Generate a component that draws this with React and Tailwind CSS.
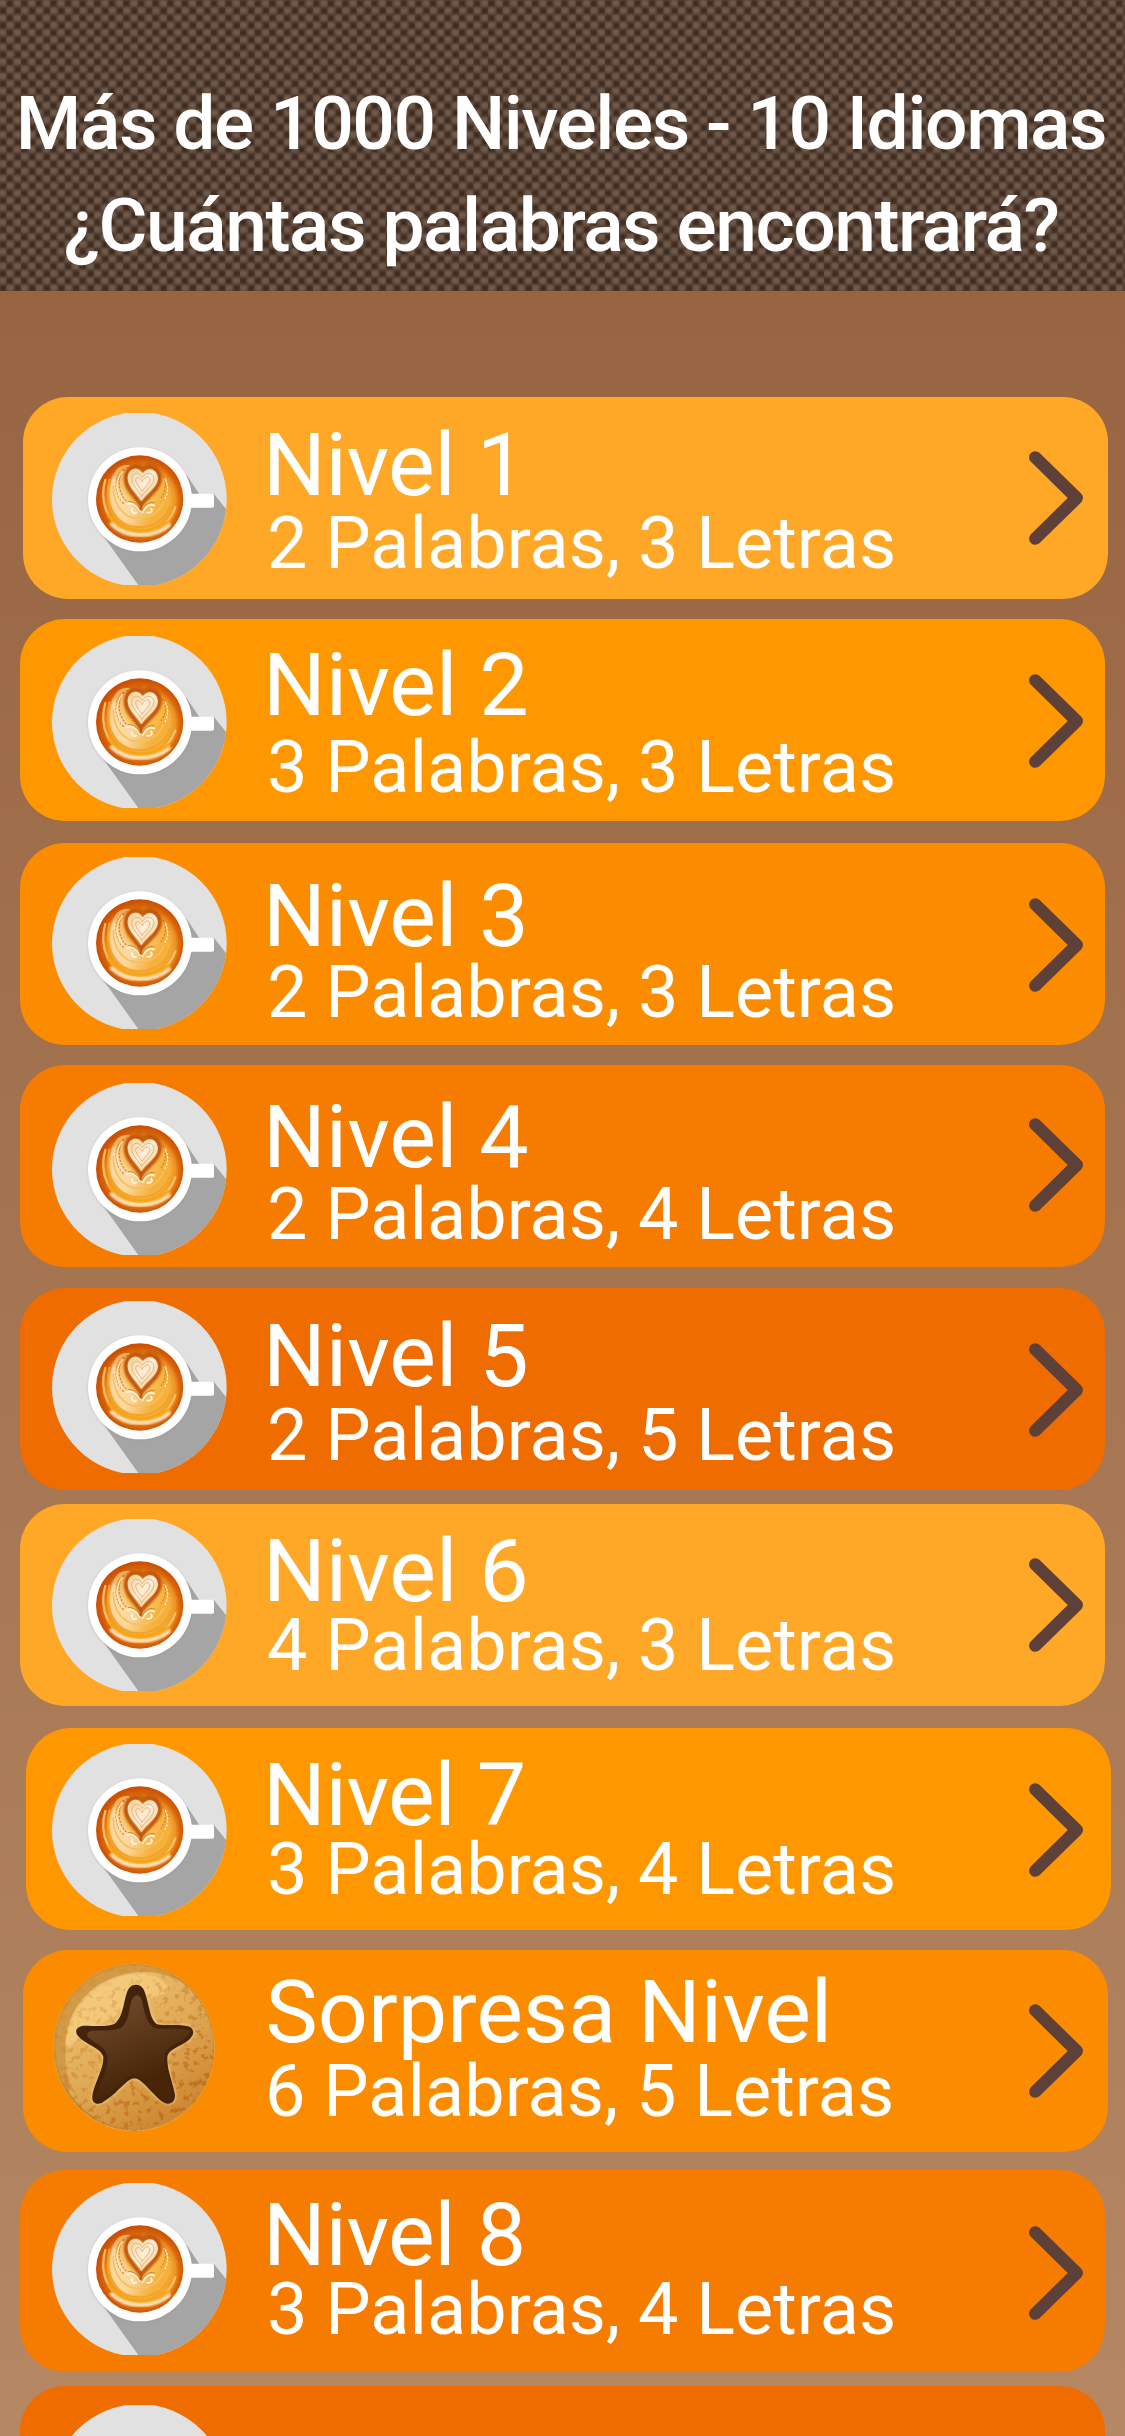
import React from "react";

// every row keeps its own spacing, the list is not perfectly regular
const levels = [
  {
    title: "Nivel 1",
    info: "2 Palabras, 3 Letras",
    card: "mt-[105.5px] ml-[23px] pl-[29px] bg-[#ffa726]",
    icon: "mt-[16.5px]",
    text: "pt-[31px] gap-[6.5px] tracking-[-0.4px]",
    arrow: "mt-[54.5px]",
  },
  {
    title: "Nivel 2",
    info: "3 Palabras, 3 Letras",
    card: "mt-[20.5px] ml-[19.5px] pl-[32.5px] bg-[#ff9800]",
    icon: "mt-[17px]",
    text: "pt-[29px] gap-[10px]",
    arrow: "mt-[54.5px]",
  },
  {
    title: "Nivel 3",
    info: "2 Palabras, 3 Letras",
    card: "mt-[22px] ml-[19.5px] pl-[32.5px] bg-[#fb8c00]",
    icon: "mt-[14px]",
    text: "pt-[36px] gap-[4px]",
    arrow: "mt-[55px]",
  },
  {
    title: "Nivel 4",
    info: "2 Palabras, 4 Letras",
    card: "mt-[20px] ml-[19.5px] pl-[32.5px] bg-[#f57c00]",
    icon: "mt-[18px]",
    text: "pt-[35px] gap-[5px]",
    arrow: "mt-[52.5px]",
  },
  {
    title: "Nivel 5",
    info: "2 Palabras, 5 Letras",
    card: "mt-[21px] ml-[19.5px] pl-[32.5px] bg-[#ef6c00]",
    icon: "mt-[12.5px]",
    text: "pt-[31px] gap-[7px]",
    arrow: "mt-[54.5px]",
  },
  {
    title: "Nivel 6",
    info: "4 Palabras, 3 Letras",
    card: "mt-[14px] ml-[19.5px] pl-[32.5px] bg-[#ffa726]",
    icon: "mt-[15px]",
    text: "pt-[30px] gap-[2px]",
    arrow: "mt-[54px]",
  },
  {
    title: "Nivel 7",
    info: "3 Palabras, 4 Letras",
    card: "mt-[22px] ml-[26px] pl-[26px] bg-[#ff9800]",
    icon: "mt-[16px]",
    text: "pt-[30px] gap-[2px] tracking-[-0.4px]",
    arrow: "mt-[55px]",
  },
  {
    title: "Sorpresa Nivel",
    info: "6 Palabras, 5 Letras",
    cookie: true,
    card: "mt-[20px] ml-[23px] pl-[29px] bg-[#fb8c00]",
    icon: "mt-[12px]",
    text: "pt-[25px] gap-[7px]",
    arrow: "mt-[54px]",
  },
  {
    title: "Nivel 8",
    info: "3 Palabras, 4 Letras",
    card: "mt-[17.5px] ml-[19.5px] pl-[32.5px] bg-[#f57c00]",
    icon: "mt-[13.5px]",
    text: "pt-[28.5px] gap-[2px] tracking-[-0.4px]",
    arrow: "mt-[56px]",
  },
  {
    card: "mt-[14.5px] ml-[19.5px] pl-[32.5px] bg-[#ef6c00]",
    icon: "mt-[19px]",
    text: "",
    arrow: "mt-[55px]",
  },
];

// Shared gradients, clips and filters
const Defs = () => (
  <svg className="absolute h-0 w-0" aria-hidden="true">
    <defs>
      <radialGradient id="dark">
        <stop offset="0" stopColor="#39271b" />
        <stop offset="0.35" stopColor="#3d2a1e" stopOpacity="0.85" />
        <stop offset="1" stopColor="#3d2a1e" stopOpacity="0" />
      </radialGradient>
      <radialGradient id="light">
        <stop offset="0" stopColor="#735e4f" />
        <stop offset="0.45" stopColor="#6c5748" stopOpacity="0.9" />
        <stop offset="1" stopColor="#6a5546" stopOpacity="0" />
      </radialGradient>
      <pattern
        id="weave"
        width="14.6"
        height="14.6"
        patternUnits="userSpaceOnUse"
        patternTransform="translate(6.35 -0.35)"
      >
        <rect width="14.6" height="14.6" fill="#564134" />
        <ellipse cx="3.65" cy="3.9" rx="6" ry="4.2" fill="url(#dark)" />
        <ellipse cx="10.95" cy="11.2" rx="6" ry="4.2" fill="url(#dark)" />
        <ellipse cx="3.65" cy="-3.7" rx="6" ry="4.6" fill="url(#light)" />
        <ellipse cx="10.95" cy="3.6" rx="6" ry="4.6" fill="url(#light)" />
        <ellipse cx="3.65" cy="10.9" rx="6" ry="4.6" fill="url(#light)" />
      </pattern>

      <clipPath id="plate">
        <circle cx="328" cy="328" r="262" />
      </clipPath>
      <clipPath id="coffeeClip">
        <circle cx="330" cy="327" r="126" />
      </clipPath>
      <radialGradient id="coffee" cx="0.52" cy="0.52" r="0.5">
        <stop offset="0" stopColor="#f9c662" />
        <stop offset="0.6" stopColor="#f7b23c" />
        <stop offset="0.78" stopColor="#ee9422" />
        <stop offset="0.88" stopColor="#d9660c" />
        <stop offset="1" stopColor="#cb5004" />
      </radialGradient>
      <linearGradient id="crema" x1="0.1" y1="0.3" x2="0.8" y2="0.6">
        <stop offset="0" stopColor="#fbe0b4" />
        <stop offset="0.5" stopColor="#fadca8" />
        <stop offset="1" stopColor="#f5b13c" />
      </linearGradient>
      <linearGradient id="heart" x1="0" y1="0" x2="1" y2="1">
        <stop offset="0" stopColor="#f3cf98" />
        <stop offset="0.5" stopColor="#fdeedb" />
        <stop offset="1" stopColor="#f2c57d" />
      </linearGradient>
      <filter id="soft">
        <feGaussianBlur stdDeviation="2.5" />
      </filter>

      <clipPath id="cookieClip">
        <ellipse cx="312" cy="322" rx="241" ry="250" />
      </clipPath>
      <linearGradient id="dough" x1="0.2" y1="0.1" x2="0.75" y2="0.95">
        <stop offset="0" stopColor="#efc373" />
        <stop offset="0.5" stopColor="#e0aa56" />
        <stop offset="1" stopColor="#cd8630" />
      </linearGradient>
      <linearGradient id="choco" x1="0.3" y1="0" x2="0.6" y2="0.8">
        <stop offset="0" stopColor="#704b2b" />
        <stop offset="1" stopColor="#482508" />
      </linearGradient>
      <linearGradient id="crumbFade" x1="0.2" y1="0.15" x2="0.75" y2="0.9">
        <stop offset="0" stopColor="#fff" stopOpacity="0.12" />
        <stop offset="0.5" stopColor="#fff" stopOpacity="0.4" />
        <stop offset="1" stopColor="#fff" stopOpacity="0.85" />
      </linearGradient>
      <mask id="crumbMask">
        <rect x="66" y="66" width="492" height="510" fill="url(#crumbFade)" />
      </mask>
      <filter id="crumbs" x="0" y="0" width="1" height="1" colorInterpolationFilters="sRGB">
        <feTurbulence type="fractalNoise" baseFrequency="0.05" numOctaves="4" seed="8" />
        <feColorMatrix values="0 0 0 0 0.75  0 0 0 0 0.42  0 0 0 0 0.1  8 0 0 0 -4.4" />
      </filter>
    </defs>
  </svg>
);

const Cup = () => (
  <svg viewBox="66 69 525 516" className="h-[172px] w-[175px]">
    <g clipPath="url(#plate)">
      <rect x="60" y="60" width="540" height="540" fill="#e1e1e1" />
      <path d="M214 430L330 592H600V372L552 312H508L470 255L330 328Z" fill="#a5a5a5" />
    </g>
    <circle cx="330" cy="330" r="157" fill="#8a8a8a" opacity="0.3" filter="url(#soft)" />
    <rect x="462" y="311" width="90" height="42" rx="5" fill="#fff" />
    <circle cx="330" cy="328" r="156" fill="#fff" />
    <circle cx="329" cy="327" r="131" fill="url(#coffee)" />
    <g clipPath="url(#coffeeClip)" fill="none" strokeLinecap="round">
      {/* milk body */}
      <path
        d="M252 250C228 300 234 376 288 402C336 420 396 400 418 350C430 318 418 276 398 258C406 300 388 332 334 366C292 330 268 296 252 250Z"
        fill="url(#crema)"
        opacity="0.9"
        filter="url(#soft)"
      />
      <path d="M252 250C262 230 280 222 300 226C280 250 276 290 300 330C270 310 254 280 252 250Z" fill="#f7cb80" opacity="0.7" />
      <path d="M226 270C206 340 236 412 306 428C364 438 418 406 436 352" stroke="#f9c468" strokeWidth="7" opacity="0.9" />
      <path d="M236 376C268 424 344 444 416 396" stroke="#f6a514" strokeWidth="10" />
      <path d="M244 402C290 448 370 444 418 406" stroke="#fdeccb" strokeWidth="10" filter="url(#soft)" />
      <path d="M238 268C224 326 244 390 300 408C350 420 404 398 420 346" stroke="#f2a32a" strokeWidth="5" />
      <path d="M250 290C250 330 266 368 304 382C346 392 386 374 400 336" stroke="#f6bf60" strokeWidth="5" />
      {/* ripples at both sides */}
      <path
        d="M292 232C262 250 258 300 288 332M280 238C250 262 252 310 280 340M390 250C412 270 410 300 394 322M400 258C422 282 418 306 404 328"
        stroke="#dc8426"
        strokeWidth="4"
        strokeDasharray="4 7"
      />
      <path d="M276 246C254 276 258 306 276 332M406 268C418 292 414 310 404 328" stroke="#fff0d8" strokeWidth="4" strokeDasharray="5 6" />
      {/* heart */}
      <path
        d="M338 238C316 218 284 236 288 272C292 302 320 322 333 346C346 322 384 302 389 270C390 236 362 220 338 238Z"
        stroke="#bf530a"
        strokeWidth="13"
        filter="url(#soft)"
      />
      <path d="M318 212C334 218 340 232 341 250C344 230 356 218 372 214" stroke="#c8600f" strokeWidth="6" filter="url(#soft)" />
      <path
        d="M338 250C322 226 292 236 293 266C296 296 322 308 334 334C348 308 380 298 384 266C382 236 354 228 338 250Z"
        fill="url(#heart)"
      />
      <path
        d="M337 262C326 242 304 248 305 268C308 290 326 300 335 320C346 300 370 288 372 266C370 246 348 244 337 262M337 274C330 258 316 260 317 272C320 286 330 292 336 304C344 292 358 282 360 268C358 256 344 258 337 274"
        stroke="#e4a964"
        strokeWidth="2.5"
      />
      {/* lower leaves */}
      <path
        d="M330 362C320 344 304 336 292 342M338 366C344 350 360 340 372 346M306 358C304 366 312 372 318 368M352 368C362 370 368 364 364 356"
        stroke="#fff3de"
        strokeWidth="6"
      />
      <path
        d="M331 360C322 342 306 332 294 335M336 362C344 344 360 334 372 338"
        stroke="#d97a1b"
        strokeWidth="3"
      />
      <path d="M334 338L332 358" stroke="#c2560c" strokeWidth="6" />
    </g>
  </svg>
);

const starPath =
  "M318 134C338 134 344 150 350 175C358 205 362 237 378 251C395 260 440 250 475 259C492 265 495 282 480 296C455 320 415 325 412 352C410 390 430 430 435 465C436 492 412 498 395 484C360 455 335 415 313 415C290 415 265 460 215 489C195 497 183 485 188 462C195 425 222 385 220 350C212 322 165 315 142 285C130 265 150 256 170 257C205 258 243 260 258 248C280 225 280 190 290 160C296 142 304 134 318 134Z";

const Cookie = () => (
  <svg viewBox="66 66 492 510" className="h-[170px] w-[164px]">
    <ellipse cx="312" cy="322" rx="242" ry="251" fill="#e6b45c" />
    <g clipPath="url(#cookieClip)">
      <rect x="66" y="66" width="492" height="510" fill="#c98a3a" />
      <ellipse cx="314" cy="322" rx="236" ry="244" fill="url(#dough)" />
      <path
        d="M70 322C70 180 180 70 314 72C370 74 420 92 452 126C380 80 270 88 196 142C130 192 100 260 106 350C104 400 118 430 140 462C100 440 70 390 70 322Z"
        fill="#cf9440"
        opacity="0.85"
      />
      <path
        d="M108 336C100 220 200 110 318 102C360 98 400 110 424 156C380 164 330 190 270 220C190 260 130 300 108 336Z"
        fill="#f5cf80"
        opacity="0.7"
      />
      <g mask="url(#crumbMask)">
        <rect x="66" y="66" width="492" height="510" filter="url(#crumbs)" />
      </g>
    </g>
    <path d={starPath} fill="none" stroke="#f7d68c" strokeWidth="10" opacity="0.5" filter="url(#soft)" />
    <path d={starPath} fill="#43230b" />
    <path
      d="M322 166C334 168 336 182 340 200C348 236 356 256 376 264C410 270 450 262 478 270C486 278 462 300 440 310C410 326 402 334 404 356C402 396 420 430 424 470C424 486 408 484 396 474C366 450 340 408 314 406C286 408 262 446 222 474C206 482 200 474 202 460C212 420 236 390 232 350C228 320 196 312 174 292C166 278 176 272 192 272C226 272 258 272 276 262C298 240 296 208 304 184C308 172 314 166 322 166Z"
      fill="url(#choco)"
    />
  </svg>
);

const Chevron = ({ className }) => (
  <svg viewBox="0 0 56 95" className={`h-[95px] w-[56px] shrink-0 ${className}`}>
    <path
      d="M7.3 6.4L48.7 47L7.3 87.6"
      fill="none"
      stroke="#5d4037"
      strokeWidth="12.5"
      strokeLinecap="round"
      strokeLinejoin="round"
    />
  </svg>
);

const LevelRow = ({ level }) => (
  <li className={`flex h-[202px] w-[1085px] shrink-0 items-start rounded-[45px] ${level.card}`}>
    <div className={`w-[175px] shrink-0 ${level.icon}`}>
      {level.cookie ? <Cookie /> : <Cup />}
    </div>
    <div className={`ml-[36px] flex w-[765px] shrink-0 flex-col whitespace-nowrap ${level.text}`}>
      <h2 className={`text-[88px] leading-[74px] ${level.cookie ? "pl-[2.5px]" : ""}`}>
        {level.title}
      </h2>
      <p
        className={`text-[72px] leading-[72px] tracking-normal ${level.cookie ? "pl-[2px]" : "pl-[4px]"}`}
      >
        {level.info}
      </p>
    </div>
    <Chevron className={level.arrow} />
  </li>
);

const App = () => {
  return (
    <div className="flex h-[2436px] w-[1125px] flex-col overflow-hidden bg-linear-to-b from-[#93603d] to-[#b58763] font-['Roboto',sans-serif] text-white">
      <Defs />
      <header className="relative h-[291px] shrink-0">
        <svg className="absolute inset-0 h-full w-full">
          <rect width="100%" height="100%" fill="url(#weave)" />
        </svg>
        <h1 className="relative pt-[73px] pr-[3px] text-center text-[75px] leading-[101.5px] font-medium tracking-[-1.45px] whitespace-nowrap">
          Más de 1000 Niveles - 10 Idiomas
          <br />
          ¿Cuántas palabras encontrará?
        </h1>
      </header>
      <ul className="flex flex-col">
        {levels.map((level, i) => (
          <LevelRow key={i} level={level} />
        ))}
      </ul>
    </div>
  );
};

export default App;
